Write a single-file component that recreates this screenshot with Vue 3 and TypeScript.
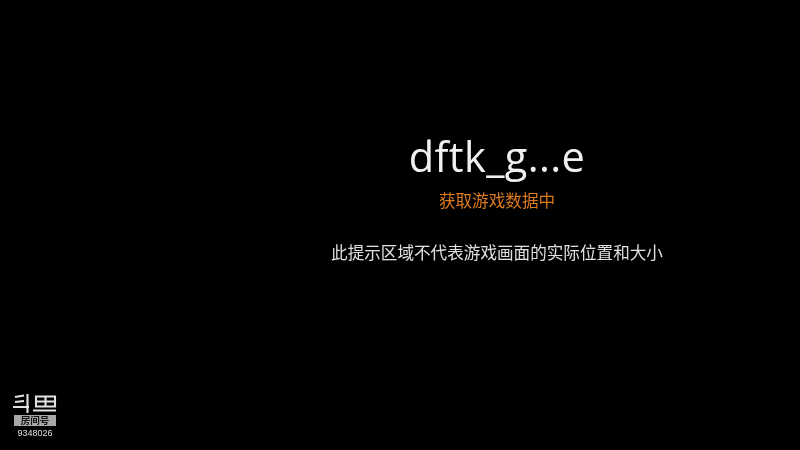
<script setup lang="ts">
const title = 'dftk_g...e'
const status = '获取游戏数据中'
const note = '此提示区域不代表游戏画面的实际位置和大小'
</script>

<template>
  <main class="screen">
    <section class="message">
      <h1 class="title">{{ title }}</h1>
      <p class="status">{{ status }}</p>
      <p class="note">{{ note }}</p>
    </section>
    <aside class="badge">
      <svg class="logo" viewBox="0 0 44 20" width="44" height="20" aria-label="斗鱼">
        <g fill="none" stroke="#e2e2e2" stroke-width="2.1">
          <path d="M2 4 L11 2.5 M2 9 L11 8 M0 14 H16 M14.5 1 V20" />
          <path d="M23 3.5 H42 V13.5 H23 Z M23 8.5 H42 M32.5 3.5 V13.5 M20 17.5 H43" />
        </g>
      </svg>
      <div class="room">房间号</div>
      <div class="number">9348026</div>
    </aside>
  </main>
</template>

<style>
html, body { margin: 0; background: #000; }
</style>

<style scoped>
.screen {
  width: 800px;
  height: 450px;
  background: #000;
  position: relative;
  overflow: hidden;
  font-family: "Open Sans", "Noto Sans CJK SC", sans-serif;
}
.message {
  display: flex;
  flex-direction: column;
  align-items: center;
  padding-top: 129px;
  padding-left: 194px;
  filter: blur(0.3px);
}
.title {
  margin: 0;
  font-size: 41.5px;
  line-height: 54px;
  font-weight: 400;
  color: #f0f0f0;
  letter-spacing: 0.4px;
}
.status {
  margin: 7px 0 0;
  font-size: 16.6px;
  line-height: 20px;
  color: #dd7a1e;
  font-family: "Noto Sans CJK SC", sans-serif;
}
.note {
  margin: 32px 0 0;
  font-size: 16.6px;
  line-height: 20px;
  color: #e0e0e0;
  font-family: "Noto Sans CJK SC", sans-serif;
}
.badge {
  position: absolute;
  left: 13px;
  top: 393px;
  width: 44px;
  display: flex;
  flex-direction: column;
  align-items: center;
  filter: blur(0.4px);
}
.logo { display: block; }
.room {
  width: 42px;
  height: 11px;
  margin-top: 2px;
  background: #a8a8a8;
  color: #111;
  font-size: 9.5px;
  font-weight: 700;
  line-height: 11px;
  text-align: center;
  font-family: "Noto Sans CJK SC", sans-serif;
}
.number {
  margin-top: 2px;
  font-family: "Liberation Sans", sans-serif;
  font-size: 9px;
  line-height: 11px;
  color: #e0e0e0;
}
</style>
